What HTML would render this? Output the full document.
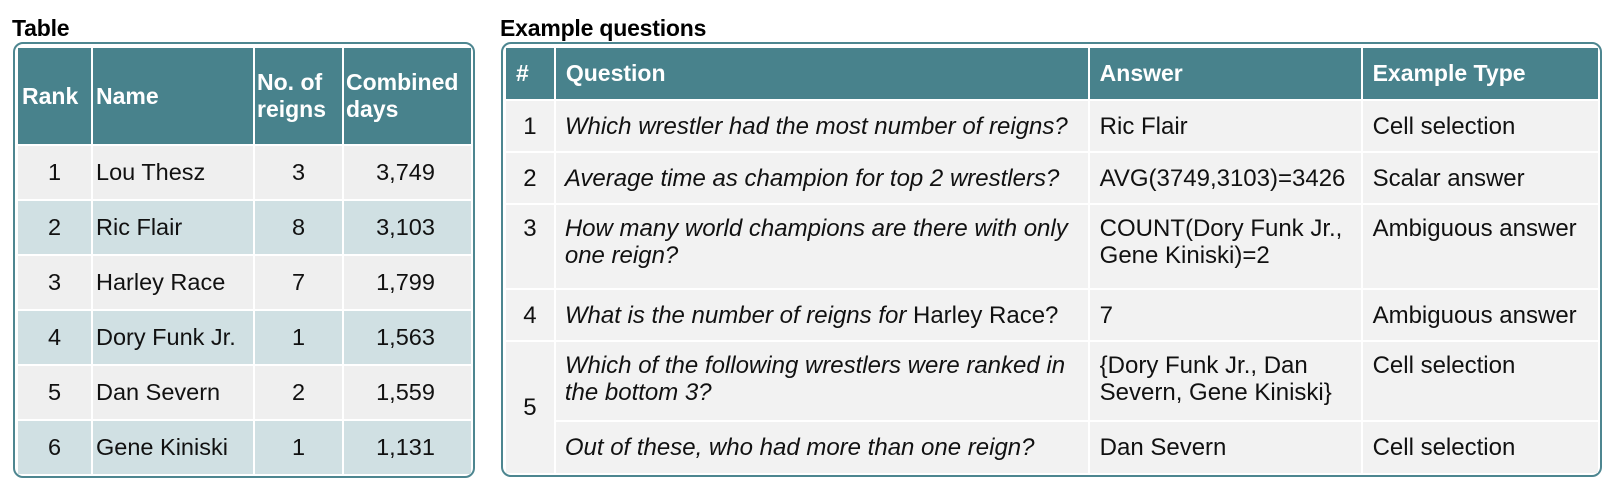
<!DOCTYPE html>
<html><head><meta charset="utf-8"><style>
*{margin:0;padding:0;box-sizing:border-box}
body{width:1613px;height:492px;background:#fff;font-family:"Liberation Sans",Arial,sans-serif;color:#111;position:relative;overflow:hidden}
.t{position:absolute;font-weight:bold;font-size:23px;color:#000;letter-spacing:-0.2px}
.box{position:absolute;border:2.5px solid #4d8690;border-radius:10px;background:#fff}
table{border-collapse:separate;border-spacing:2px;position:absolute;left:1px;top:2px;table-layout:fixed}
td,th{font-size:23.5px;padding:0 0 0 3px;vertical-align:middle;line-height:27px}
th{background:#48828c;color:#fff;text-align:left;font-weight:bold;font-size:23px}
.g td{background:#efefef}
.b td{background:#d0e0e3}
.c{text-align:center;padding:0}
.r{text-align:center;padding:0 4px 0 0}
#q td{background:#f2f2f2;vertical-align:top;padding-top:10px;font-size:24px}
#q td.m{vertical-align:middle;padding-top:0}
#q td.qq{padding-left:9px;padding-right:18px}
i{font-style:italic}
</style></head><body>
<div class="t" style="left:12px;top:15px">Table</div>
<div class="t" style="left:500px;top:15px">Example questions</div>

<div class="box" style="left:13px;top:42px;width:462px;height:436px">
<table>
<colgroup><col style="width:73px"><col style="width:160px"><col style="width:87px"><col style="width:127px"></colgroup>
<tr style="height:96px"><th style="padding-left:4px">Rank</th><th>Name</th><th style="padding-left:2px">No. of<br>reigns</th><th style="padding-left:2px">Combined<br>days</th></tr>
<tr class="g" style="height:53px"><td class="c">1</td><td>Lou Thesz</td><td class="c">3</td><td class="r">3,749</td></tr>
<tr class="b" style="height:53px"><td class="c">2</td><td>Ric Flair</td><td class="c">8</td><td class="r">3,103</td></tr>
<tr class="g" style="height:53px"><td class="c">3</td><td>Harley Race</td><td class="c">7</td><td class="r">1,799</td></tr>
<tr class="b" style="height:53px"><td class="c">4</td><td>Dory Funk Jr.</td><td class="c">1</td><td class="r">1,563</td></tr>
<tr class="g" style="height:53px"><td class="c">5</td><td>Dan Severn</td><td class="c">2</td><td class="r">1,559</td></tr>
<tr class="b" style="height:53px"><td class="c">6</td><td>Gene Kiniski</td><td class="c">1</td><td class="r">1,131</td></tr>
</table></div>

<div class="box" style="left:501px;top:42px;width:1101px;height:435px">
<table id="q">
<colgroup><col style="width:48px"><col style="width:534px"><col style="width:271px"><col style="width:236px"></colgroup>
<tr style="height:51px"><th style="padding-left:10px">#</th><th style="padding-left:10px">Question</th><th style="padding-left:10px">Answer</th><th style="padding-left:10px">Example Type</th></tr>
<tr style="height:50px"><td class="c m">1</td><td class="m qq"><i>Which wrestler had the most number of reigns?</i></td><td class="m" style="padding-left:10px">Ric Flair</td><td class="m" style="padding-left:10px">Cell selection</td></tr>
<tr style="height:50px"><td class="c m">2</td><td class="m qq"><i>Average time as champion for top 2 wrestlers?</i></td><td class="m" style="padding-left:10px">AVG(3749,3103)=3426</td><td class="m" style="padding-left:10px">Scalar answer</td></tr>
<tr style="height:83px"><td class="c" style="padding-top:10px">3</td><td class="qq"><i>How many world champions are there with only one reign?</i></td><td style="padding-left:10px">COUNT(Dory Funk Jr., Gene Kiniski)=2</td><td style="padding-left:10px">Ambiguous answer</td></tr>
<tr style="height:50px"><td class="c m">4</td><td class="m qq"><i>What is the number of reigns for</i> Harley Race?</td><td class="m" style="padding-left:10px">7</td><td class="m" style="padding-left:10px">Ambiguous answer</td></tr>
<tr style="height:78px"><td class="c m" rowspan="2">5</td><td class="qq"><i>Which of the following wrestlers were ranked in the bottom 3?</i></td><td style="padding-left:10px">{Dory Funk Jr., Dan Severn, Gene Kiniski}</td><td style="padding-left:10px">Cell selection</td></tr>
<tr style="height:51px"><td class="m qq"><i>Out of these, who had more than one reign?</i></td><td class="m" style="padding-left:10px">Dan Severn</td><td class="m" style="padding-left:10px">Cell selection</td></tr>
</table></div>
</body></html>
